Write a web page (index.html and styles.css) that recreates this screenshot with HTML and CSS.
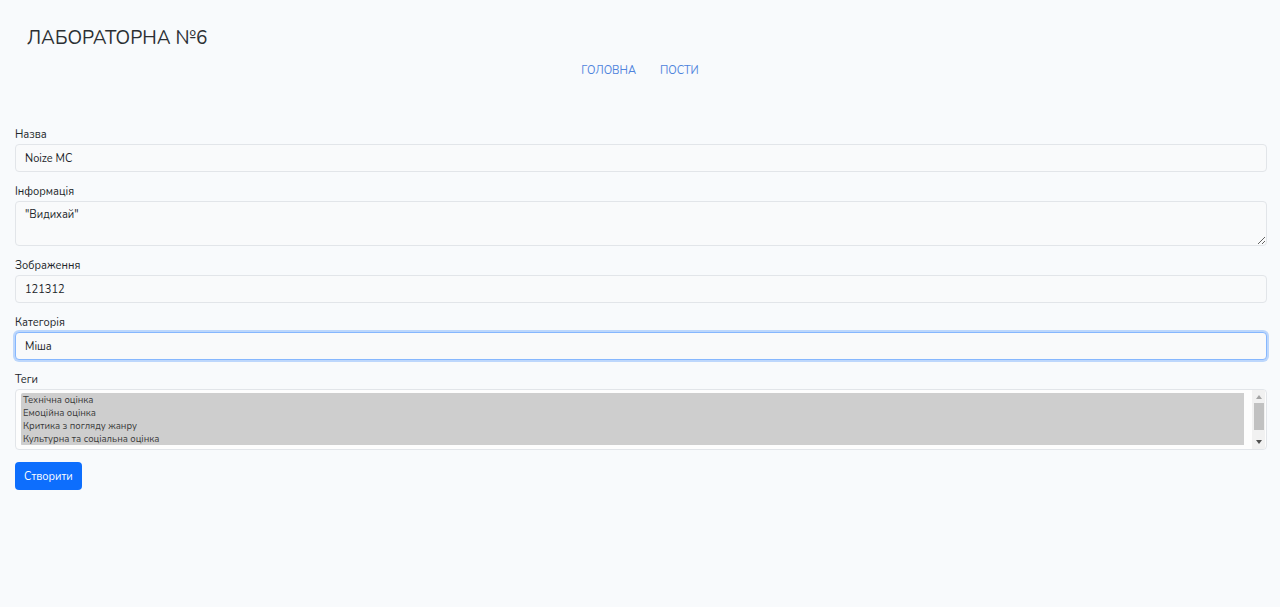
FILE: index.html
```html
<!DOCTYPE html>
<html lang="uk">
<head>
<meta charset="utf-8">
<title>Лабораторна №6</title>
<link rel="stylesheet" href="styles.css">
</head>
<body>
<header class="header">
  <h1 class="title">ЛАБОРАТОРНА №6</h1>
  <nav class="nav">
    <a class="nav-link" href="#">ГОЛОВНА</a>
    <a class="nav-link" href="#">ПОСТИ</a>
  </nav>
</header>
<main class="content">
  <form class="form">
    <div class="group">
      <label class="label">Назва</label>
      <input class="control" type="text" value="Noize MC">
    </div>
    <div class="group">
      <label class="label">Інформація</label>
      <textarea class="control area">"Видихай"</textarea>
    </div>
    <div class="group">
      <label class="label">Зображення</label>
      <input class="control" type="text" value="121312">
    </div>
    <div class="group">
      <label class="label">Категорія</label>
      <input class="control focused" type="text" value="Міша">
    </div>
    <div class="group">
      <label class="label">Теги</label>
      <div class="tags-box">
        <select class="tags" multiple>
          <option class="sel" selected>Технічна оцінка</option>
          <option class="sel" selected>Емоційна оцінка</option>
          <option class="sel" selected>Критика з погляду жанру</option>
          <option class="sel" selected>Культурна та соціальна оцінка</option>
          <option>Історична оцінка</option>
          <option>Загальна оцінка</option>
        </select>
        <div class="scrollbar">
          <span class="arrow up"></span>
          <span class="thumb"></span>
          <span class="track"></span>
          <span class="arrow down"></span>
        </div>
      </div>
    </div>
    <button class="btn" type="button">Створити</button>
  </form>
</main>
</body>
</html>
```
FILE: styles.css
```css
* { box-sizing: border-box; }
html, body { margin: 0; padding: 0; }
body {
  background: #f8fafc;
  color: #212529;
  font-family: "Nunito", "Noto Sans", "Open Sans", sans-serif;
  font-size: 11px;
  height: 607px;
  overflow: hidden;
}
.header {
  padding: 26px 0 0 27px;
}
.title {
  margin: 0;
  font-size: 19px;
  line-height: 24px;
  font-weight: 400;
  color: #2b2f33;
}
.nav {
  display: flex;
  justify-content: center;
  gap: 24px;
  margin-top: 13px;
  padding-right: 27px;
}
.nav-link {
  color: #4f84dc;
  text-decoration: none;
  font-size: 11px;
  line-height: 16px;
}
.content {
  padding: 47px 13px 0 15px;
}
.form { display: flex; flex-direction: column; }
.group { display: flex; flex-direction: column; margin-bottom: 11px; }
.label {
  font-size: 11px;
  line-height: 16px;
  padding-top: 1px;
  margin-bottom: 1px;
  color: #212529;
}
.control {
  font-family: inherit;
  font-size: 11px;
  color: #212529;
  background: #f9fafb;
  border: 1px solid #e2e5e9;
  border-radius: 4px;
  height: 28px;
  padding: 0 9px;
  outline: none;
}
.area {
  height: 45px;
  padding: 5px 9px;
  resize: vertical;
  line-height: 16px;
}
.focused {
  border-color: #86b7fe;
  box-shadow: 0 0 0 2px rgba(13, 110, 253, 0.25);
}
.tags-box {
  display: flex;
  height: 61px;
  padding: 3px 1px 3px 5px;
  background: #fdfdfd;
  border: 1px solid #e2e5e9;
  border-radius: 4px;
}
.tags {
  flex: 1;
  height: 100%;
  border: none;
  padding: 0 9px 0 0;
  margin: 0;
  background: transparent;
  font-family: inherit;
  font-size: 9.5px;
  color: #3a3a3a;
  overflow: hidden;
  outline: none;
}
.tags option {
  padding: 0 2px;
  line-height: 13px;
  min-height: 13px;
  width: 1223px;
}
.tags option.sel {
  background: linear-gradient(#cecece, #cecece);
  color: #3a3a3a;
}
.scrollbar {
  width: 13px;
  display: flex;
  flex-direction: column;
  align-items: center;
  background: #f1f1f1;
  margin: -3px 0;
}
.arrow {
  width: 0;
  height: 0;
  border-left: 3px solid transparent;
  border-right: 3px solid transparent;
}
.arrow.up {
  border-bottom: 4px solid #a3a3a3;
  margin: 5px 0 4px;
}
.arrow.down {
  border-top: 4px solid #505050;
  margin: 3px 0 5px;
}
.thumb {
  width: 10px;
  height: 27px;
  background: #c1c1c1;
}
.track { flex: 1; }
.btn {
  align-self: flex-start;
  margin-top: 1px;
  height: 28px;
  padding: 0 9px;
  background: #0d6efd;
  color: #fff;
  border: none;
  border-radius: 4px;
  font-family: inherit;
  font-size: 11px;
}
```
